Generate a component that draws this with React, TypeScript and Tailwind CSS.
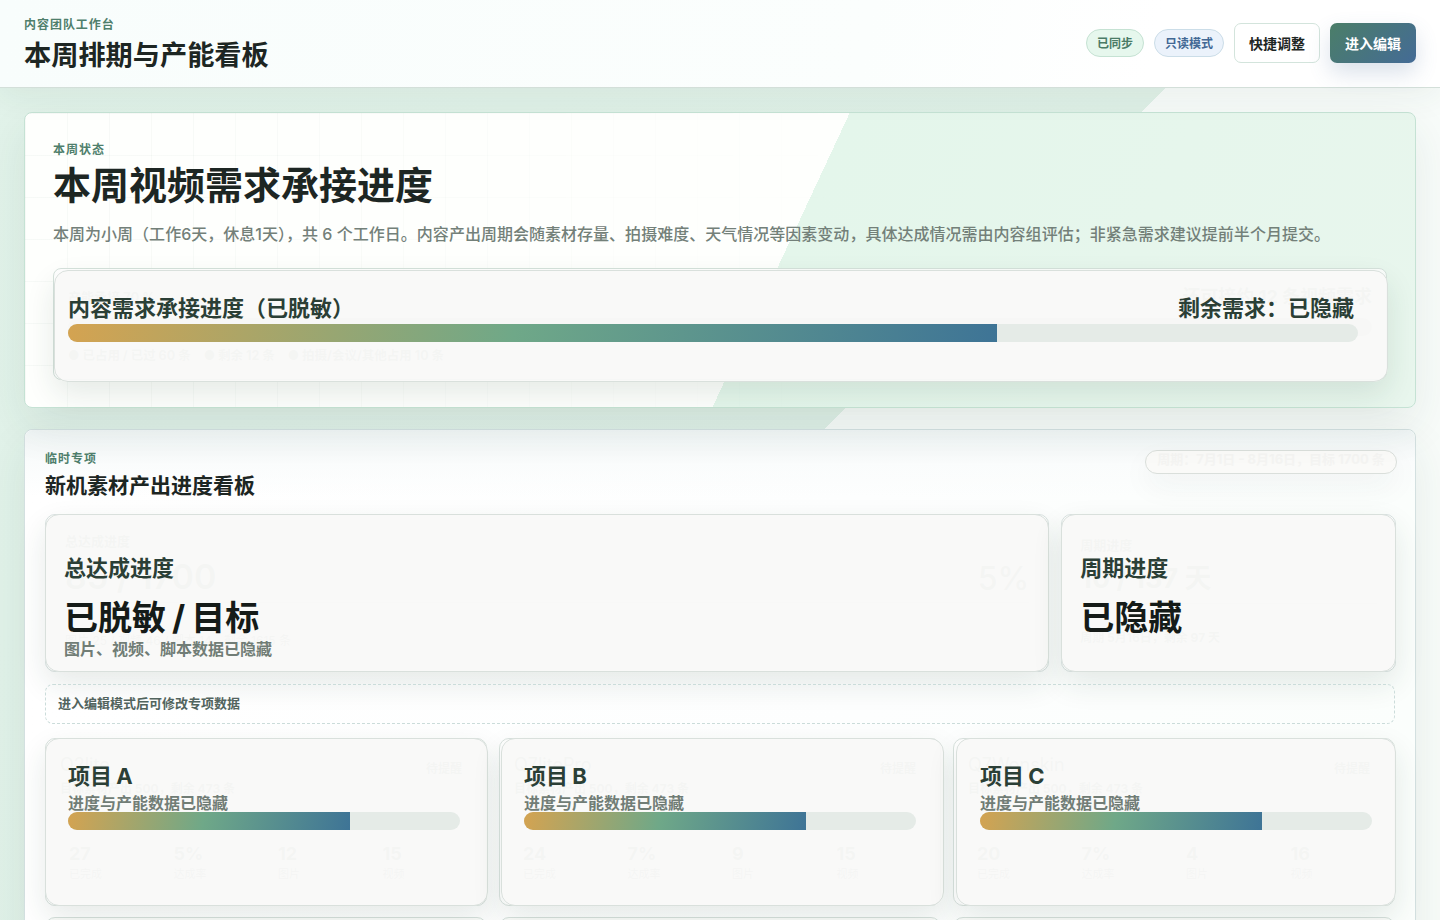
import type { ReactNode } from "react";

const OVERLAY =
  "absolute rounded-[14px] border border-[#d9e0dc] bg-[#f9f9f7]/93 shadow-[0_12px_30px_rgba(31,61,50,0.11)]";

function Progress({ value }: { value: number }) {
  return (
    <div className="h-[18px] overflow-hidden rounded-full bg-[#e5ebe7]">
      <div
        className="h-full bg-[linear-gradient(100deg,#d4a351_0%,#6fa888_48%,#3e7496_100%)]"
        style={{ width: `${value}%` }}
      />
    </div>
  );
}

function Eyebrow({ children }: { children: ReactNode }) {
  return <p className="text-[12px] leading-4 font-bold tracking-[0.96px] text-[#4f7f6c]">{children}</p>;
}

function Header() {
  return (
    <header className="relative z-10 flex h-[88px] shrink-0 items-center justify-between border-b border-[#d3dfd9] bg-[linear-gradient(100deg,#f8fdfc_0%,#fbfefd_60%,#ffffff_80%)] px-6 shadow-[0_10px_30px_rgba(31,61,50,0.06)]">
      <div className="pt-1">
        <Eyebrow>内容团队工作台</Eyebrow>
        <h1 className="mt-1 -mb-px text-[27.2px] leading-[38px] font-bold text-[#1d2623]">本周排期与产能看板</h1>
      </div>
      <div className="flex items-center gap-[10px] pb-px">
        <span className="flex h-7 items-center rounded-full border border-[#c5e2d3] bg-[#e6f7ed] px-[10px] pt-px text-[12px] font-bold text-[#4b7b66]">
          已同步
        </span>
        <span className="flex h-7 items-center rounded-full border border-[#cbdde8] bg-[#ebf2fb] px-[10px] pt-px text-[12px] font-bold text-[#426895]">
          只读模式
        </span>
        <button className="h-10 rounded-[7px] border border-[#d3e4dc] bg-white px-[14px] text-[14px] font-bold text-[#1d2623]">
          快捷调整
        </button>
        <button className="h-10 rounded-[7px] bg-[linear-gradient(135deg,#4b7e68,#446b96)] px-[15px] text-[14px] font-bold text-white shadow-[0_10px_22px_rgba(68,107,150,0.2)]">
          进入编辑
        </button>
      </div>
    </header>
  );
}

function Hero() {
  return (
    <section className="relative h-[296px] shrink-0 rounded-[8px] border border-[#c5e2d4] bg-[linear-gradient(115deg,#fefffd_0%,#fefffd_54%,#e4f6eb_54%,#e8f6ed_100%)] px-7 pt-[29px] shadow-[0_18px_45px_rgba(31,61,50,0.09)]">
      <div className="pointer-events-none absolute inset-0 rounded-[8px] bg-[linear-gradient(90deg,rgba(70,120,100,0.045)_1px,transparent_1px),linear-gradient(rgba(70,120,100,0.04)_1px,transparent_1px)] bg-[size:42px_42px] [mask-image:linear-gradient(90deg,#000,transparent_60%)]" />
      <div className="relative">
        <Eyebrow>本周状态</Eyebrow>
        <h2 className="mt-[2px] text-[38px] leading-[50px] font-bold text-[#1d2623]">本周视频需求承接进度</h2>
        <p className="mt-3 text-[16px] leading-6 font-medium tracking-[0.02px] whitespace-nowrap text-[#738079]">
          本周为小周（工作6天，休息1天），共 6 个工作日。内容产出周期会随素材存量、拍摄难度、天气情况等因素变动，具体达成情况需由内容组评估；非紧急需求建议提前半个月提交。
        </p>
      </div>
      <div className="relative mt-[22px] h-[112px] rounded-[8px] border border-[#d6e2dc] bg-white/80 px-[14px] pt-4 text-[#b6bebb]">
        <div className="flex justify-between leading-6 font-bold">
          <span className="text-[13px]">产能承接 70 %</span>
          <span className="text-[18px]">还可接约 12 条视频需求</span>
        </div>
        <div className="mt-[9px] h-[18px] rounded-full bg-[#dfe5e1]" />
        <div className="mt-[12px] flex gap-[13px] text-[12.5px] leading-4 font-bold">
          <span>● 已占用 / 已过 60 条</span>
          <span>● 剩余 12 条</span>
          <span>● 拍摄/会议/其他占用 10 条</span>
        </div>
        <div className={`${OVERLAY} left-0 -right-[2px] top-[1px] h-[112px] px-[13px] pt-[22px]`}>
          <div className="flex justify-between pr-[20px] text-[22px] leading-[30px] font-bold text-[#2b3f36]">
            <span>内容需求承接进度（已脱敏）</span>
            <span>剩余需求：已隐藏</span>
          </div>
          <div className="mt-px w-[1290px]">
            <Progress value={72} />
          </div>
        </div>
      </div>
    </section>
  );
}

type MetricProps = {
  title: string;
  value: string;
  note?: string;
  ghost: ReactNode;
};

function Metric({ title, value, note, ghost }: MetricProps) {
  return (
    <div className="relative h-[158px] rounded-[10px] border border-[#d9e2e1] bg-white text-[#b6bebb]">
      {ghost}
      <div className={`${OVERLAY} -inset-px px-[18px] pt-[38px]`}>
        <h4 className="text-[22px] leading-[30px] font-bold text-[#2b3f36]">{title}</h4>
        <p className="mt-[11px] text-[34px] leading-[48px] font-bold [word-spacing:-2px] text-[#151b18]">{value}</p>
        {note && <p className="-mt-[5px] text-[16px] leading-6 font-bold text-[#717d76]">{note}</p>}
      </div>
    </div>
  );
}

type Project = {
  name: string;
  source: string;
  stats: [string, string][];
  overlay: string;
};

const PROJECTS: Project[] = [
  {
    name: "项目 A",
    source: "Q2lite",
    stats: [["27", "已完成"], ["5%", "达成率"], ["12", "图片"], ["15", "视频"]],
    overlay: "-left-px -right-[2px] pl-[22px]",
  },
  {
    name: "项目 B",
    source: "Q7litePro",
    stats: [["24", "已完成"], ["7%", "达成率"], ["9", "图片"], ["15", "视频"]],
    overlay: "left-px -right-1 pl-[22px]",
  },
  {
    name: "项目 C",
    source: "Q7Wonskin",
    stats: [["20", "已完成"], ["7%", "达成率"], ["4", "图片"], ["16", "视频"]],
    overlay: "left-[2px] -right-[2px] pl-[23px]",
  },
];

function ProjectCard({ project }: { project: Project }) {
  return (
    <div className="relative h-[168px] rounded-[10px] border border-[#d9e2de] bg-white px-[14px] pt-[14px] text-[#b6bebb]">
      <div className="flex justify-between">
        <span className="text-[18px] leading-6">{project.source}</span>
        <span className="pt-1 pr-[10px] text-[12px] leading-6 font-bold">待提醒</span>
      </div>
      <p className="text-[12px] leading-4 font-bold">目标素材产出 500，剩余 473 条</p>
      <div className="mt-[45px] -mr-[15px] grid grid-cols-4 pl-[9px]">
        {project.stats.map(([value, label]) => (
          <div key={label}>
            <div className="text-[18px] leading-6 font-bold">{value}</div>
            <div className="text-[11px] leading-4">{label}</div>
          </div>
        ))}
      </div>
      <div className={`${OVERLAY} ${project.overlay} -top-px h-[168px] pt-[22px]`}>
        <h4 className="text-[22px] leading-[30px] font-bold [word-spacing:-1px] text-[#2b3f36]">{project.name}</h4>
        <p className="pt-[3px] text-[16px] leading-[18px] font-bold text-[#717d76]">进度与产能数据已隐藏</p>
        <div className="w-[392px]">
          <Progress value={72} />
        </div>
      </div>
    </div>
  );
}

function Board() {
  return (
    <section className="h-[560px] shrink-0 rounded-t-[8px] border border-[#d3e0e0] bg-[linear-gradient(90deg,#ffffff,#fdfefe_60%,#fbfefc)] px-5 pt-5 shadow-[0_18px_45px_rgba(31,61,50,0.09)]">
      <div className="-mx-5 -mt-5 flex h-[84px] items-start justify-between rounded-t-[8px] bg-[linear-gradient(#f0f5f5_0%,#fafcfc_38%,transparent_80%)] px-5 pt-5">
        <div className="pt-px">
          <Eyebrow>临时专项</Eyebrow>
          <h3 className="mt-1 text-[21px] leading-[30px] font-bold text-[#1d2623]">新机素材产出进度看板</h3>
        </div>
        <div className="-mr-[2px] h-[24px] w-[252px] overflow-hidden rounded-full border border-[#dadfdb] bg-[#fafaf8] text-center text-[13px] leading-[16px] font-bold whitespace-nowrap text-[#f4f4f2] shadow-[0_12px_30px_rgba(31,61,50,0.05)]">
          周期：7月1日 - 8月16日，目标 1700 条
        </div>
      </div>
      <div className="-mr-px grid grid-cols-[3fr_1fr] gap-3">
        <Metric
          title="总达成进度"
          value="已脱敏 / 目标"
          note="图片、视频、脚本数据已隐藏"
          ghost={
            <div className="px-[19px] pt-4">
              <p className="text-[13px] leading-5 font-bold">总达成进度</p>
              <div className="mt-px flex items-center justify-between text-[34px] leading-[46px]">
                <span className="font-semibold">85 / 1700</span>
                <span className="pt-1 text-[32px] font-medium">5%</span>
              </div>
              <div className="h-px bg-[#e8ecea]" />
              <p className="mt-[30px] text-[12px] leading-4">图片 25 / 视频 46 / 脚本 14，剩余 1615 条</p>
            </div>
          }
        />
        <Metric
          title="周期进度"
          value="已隐藏"
          ghost={
            <div className="px-[18px] pt-[20px]">
              <p className="text-[13px] leading-5 font-bold">周期进度</p>
              <p className="mt-1 text-[27px] leading-10 font-bold">10 / 137 天</p>
              <div className="mt-[4px] h-px bg-[#e8ecea]" />
              <p className="mt-[26px] text-[12px] leading-4 font-bold">周期 5月16日，剩余 97 天</p>
            </div>
          }
        />
      </div>
      <div className="relative mt-3 flex h-10 items-center rounded-[8px] border border-dashed border-[#cbdcda] px-3 text-[13px] font-bold text-[#52645e]">
        进入编辑模式后可修改专项数据
      </div>
      <div className="mt-[14px] grid grid-cols-3 gap-3">
        {PROJECTS.map((project) => (
          <ProjectCard key={project.name} project={project} />
        ))}
        {PROJECTS.map((project) => (
          <div key={`${project.name}-next`} className="-mt-px h-[168px] rounded-[10px] border border-[#d6e0dc] bg-[#fafbf9]" />
        ))}
      </div>
    </section>
  );
}

export default function App() {
  return (
    <div className="flex h-[920px] w-full flex-col overflow-hidden bg-[linear-gradient(135deg,#e2f3ea_0%,#e0f1e8_53.1%,#f8fcfa_53.1%,#f8fcf9_100%)] font-[Inter,'Noto_Sans_CJK_SC',sans-serif]">
      <Header />
      <main className="flex flex-col gap-[21px] px-6 pt-6">
        <Hero />
        <Board />
      </main>
    </div>
  );
}
